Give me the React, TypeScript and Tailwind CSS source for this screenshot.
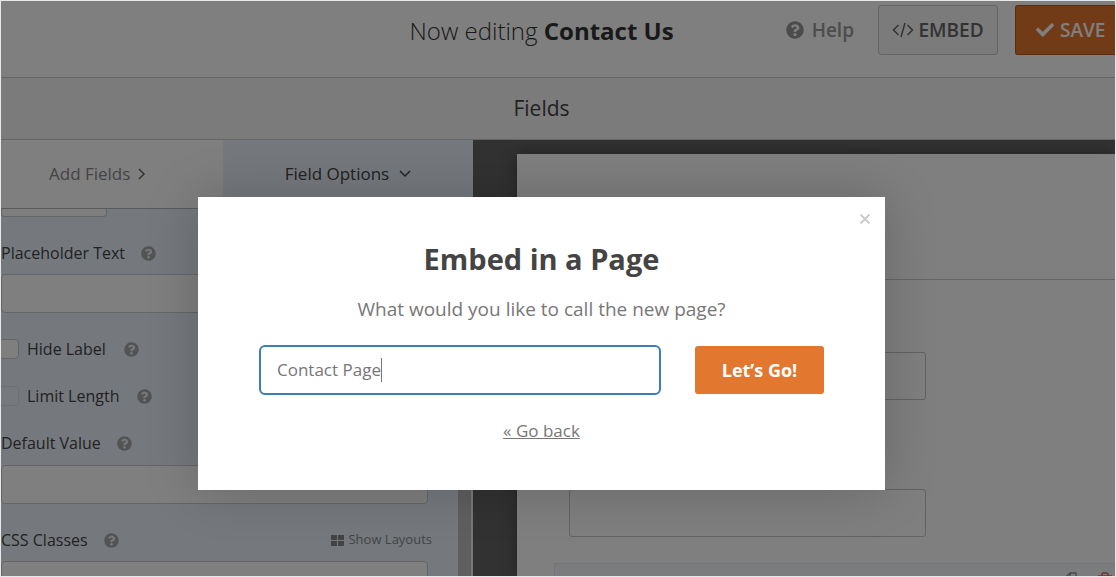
import { useState } from "react";
import type { ReactNode } from "react";
import { FaCheck, FaQuestionCircle } from "react-icons/fa";

const CodeIcon = () => (
  <svg
    viewBox="0 0 22 16"
    fill="none"
    stroke="currentColor"
    strokeWidth="1.5"
    className="h-4 w-[22px]"
    aria-hidden="true"
  >
    <path d="M6.5 3 1.5 8l5 5M15.5 3l5 5-5 5M13 1 9 15" />
  </svg>
);

const LayoutsIcon = () => (
  <svg viewBox="0 0 13 11" fill="currentColor" className="h-[11px] w-[13px]" aria-hidden="true">
    <path d="M0 0h6v5H0zM7 0h6v5H7zM0 6h6v5H0zM7 6h6v5H7z" />
  </svg>
);

const CopyIcon = () => (
  <svg
    viewBox="0 0 16 16"
    fill="none"
    stroke="currentColor"
    strokeWidth="1.5"
    className="size-4"
    aria-hidden="true"
  >
    <path d="M5 1h6v10H1V5zM5 1v4H1M11 5h4v10H6v-4" />
  </svg>
);

const TrashIcon = () => (
  <svg
    viewBox="0 0 14 16"
    fill="none"
    stroke="currentColor"
    strokeWidth="1.5"
    className="h-4 w-3.5"
    aria-hidden="true"
  >
    <path d="M4 4V2l1-1h4l1 1v2M0 4h14M2 4v11h10V4M5 6v7M9 6v7" />
  </svg>
);

const HelpTip = () => <FaQuestionCircle className="size-[15px] text-[#a6a6a6]" aria-hidden="true" />;

type FieldLabelProps = {
  id: string;
  children: ReactNode;
};

const FieldLabel = ({ id, children }: FieldLabelProps) => (
  <div className="flex h-6 items-center gap-4">
    <label htmlFor={id} className="whitespace-nowrap">
      {children}
    </label>
    <HelpTip />
  </div>
);

type FieldToggleProps = FieldLabelProps & {
  muted?: boolean;
};

const FieldToggle = ({ id, children, muted }: FieldToggleProps) => (
  <div className="-ml-0.5 flex h-6 items-center">
    <input
      id={id}
      type="checkbox"
      className={`mr-2 size-5 shrink-0 appearance-none rounded border ${
        muted ? "border-[#d8dee6] bg-[#edf3fa]" : "border-[#cacaca] bg-white"
      }`}
    />
    <label htmlFor={id} className="mr-[18px] whitespace-nowrap">
      {children}
    </label>
    <HelpTip />
  </div>
);

const fieldInput = "block h-[39px] w-full rounded border border-[#cacaca] bg-white px-3";

const Header = () => (
  <header className="flex h-[77px] shrink-0 items-start justify-end border-b border-[#cacaca] bg-white pt-1">
    <h1 className="mt-2 text-2xl leading-9 font-light whitespace-nowrap text-[#333]">
      Now editing <strong className="font-bold">Contact Us</strong>
    </h1>
    <div className="ml-28 flex h-[50px] shrink-0 items-center text-[19px] font-semibold">
      <button type="button" className="mr-6 flex items-center gap-2 text-[#999]">
        <FaQuestionCircle className="size-[18px]" aria-hidden="true" />
        Help
      </button>
      <button
        type="button"
        className="mr-[17px] flex h-full w-[120px] items-center justify-center gap-1 rounded-[3px] border border-[#cacaca] bg-[#f6f6f6] text-[#666]"
      >
        <CodeIcon />
        EMBED
      </button>
      <button
        type="button"
        className="flex h-full w-[100px] items-center gap-1.5 rounded-l-[3px] border border-r-0 border-[#b85a1b] bg-[#e27730] pl-5 text-white"
      >
        <FaCheck className="size-[18px]" aria-hidden="true" />
        SAVE
      </button>
    </div>
  </header>
);

const Sidebar = () => (
  <aside className="flex w-[472px] shrink-0 flex-col overflow-hidden bg-[#ebf3fc] text-base text-[#444]">
    <div className="flex h-[69px] shrink-0 border-b border-[#b0b6bd] text-[17px]">
      <button
        type="button"
        className="flex w-[222px] items-center gap-2 bg-white pl-12 text-[#888]"
      >
        Add Fields
        <svg viewBox="0 0 8 12" fill="none" stroke="#666" strokeWidth="1.5" className="h-3 w-2">
          <path d="m1 1 5 5-5 5" />
        </svg>
      </button>
      <button type="button" className="flex flex-1 items-center justify-center gap-2.5">
        Field Options
        <svg viewBox="0 0 12 8" fill="none" stroke="currentColor" strokeWidth="1.5" className="h-2 w-3">
          <path d="m1 1 5 5 5-5" />
        </svg>
      </button>
    </div>
    <div className="flex min-h-0 flex-1">
      <div className="flex-1 overflow-hidden pr-[30px]">
        <div className="h-2 w-[106px] rounded-b border border-t-0 border-[#cacaca] bg-white" />
        <div className="mt-6">
          <FieldLabel id="placeholder">Placeholder Text</FieldLabel>
        </div>
        <input id="placeholder" type="text" className={`mt-[9px] ${fieldInput}`} />
        <div className="mt-6 flex flex-col gap-[23px]">
          <FieldToggle id="hide-label">Hide Label</FieldToggle>
          <FieldToggle id="limit-length" muted>
            Limit Length
          </FieldToggle>
          <FieldLabel id="default-value">Default Value</FieldLabel>
        </div>
        <input id="default-value" type="text" className={`mt-[10px] ${fieldInput}`} />
        <div className="mt-6 -mr-1 flex items-center justify-between">
          <FieldLabel id="css-classes">CSS Classes</FieldLabel>
          <a href="#layouts" className="flex items-center gap-1 text-[13px] text-[#888]">
            <LayoutsIcon />
            Show Layouts
          </a>
        </div>
        <input id="css-classes" type="text" className={`mt-[9px] ${fieldInput}`} />
      </div>
      <div className="mr-0.5 w-[13px] bg-[#bfbfbf]" />
    </div>
  </aside>
);

const Preview = () => (
  <main className="flex-1 overflow-hidden bg-[#646464] pt-3.5 pl-11">
    <div className="h-full bg-white shadow-[0_0_15px_rgba(0,0,0,0.3)]">
      <div className="h-[126px] border-b border-[#cacaca]" />
      <div className="flex flex-col pt-[72px] pl-[52px]">
        <input
          type="text"
          aria-label="Name"
          className="h-12 w-[357px] rounded-[3px] border border-[#c4c4c4] bg-white"
        />
        <input
          type="text"
          aria-label="Email"
          className="mt-[89px] h-12 w-[357px] rounded-[3px] border border-[#c4c4c4] bg-white"
        />
      </div>
      <div className="mt-[26px] ml-[37px] flex h-28 justify-end gap-1 border border-r-0 border-[#e6ebf1] bg-[#f5f8fc] pt-1.5">
        <button
          type="button"
          aria-label="Duplicate field"
          className="flex size-7 justify-center rounded-full bg-[#fafbfd] pt-0.5 text-[#999]"
        >
          <CopyIcon />
        </button>
        <button
          type="button"
          aria-label="Delete field"
          className="-mr-1 flex size-7 justify-center rounded-full bg-[#fafbfd] pt-0.5 text-[#d66e6e]"
        >
          <TrashIcon />
        </button>
      </div>
    </div>
  </main>
);

const EmbedDialog = () => {
  const [name, setName] = useState("Contact Page");

  return (
    <div
      role="dialog"
      aria-labelledby="embed-title"
      className="relative flex w-[687px] flex-col items-center bg-white pt-11 pb-[47px] text-[#777] shadow-[0_0_50px_rgba(0,0,0,0.2)]"
    >
      <button type="button" aria-label="Close" className="absolute top-4 right-3.5 text-[#ccc]">
        <svg viewBox="0 0 12 12" stroke="currentColor" strokeWidth="2" className="size-3">
          <path d="m1.5 1.5 9 9M10.5 1.5l-9 9" />
        </svg>
      </button>
      <h2 id="embed-title" className="text-[29px] leading-9 font-bold text-[#444]">
        Embed in a Page
      </h2>
      <label htmlFor="page-name" className="mt-5 text-[19px] leading-6">
        What would you like to call the new page?
      </label>
      <div className="mt-6 flex w-full items-center gap-[34px] px-[61px]">
        <div className="flex h-[50px] flex-1 items-center rounded-md border-2 border-[#3c7fb8] px-4">
          <input
            id="page-name"
            type="text"
            value={name}
            onChange={(e) => setName(e.target.value)}
            className="field-sizing-content text-[17px] outline-none"
          />
          <span className="h-6 w-px bg-[#777]" />
        </div>
        <button
          type="button"
          className="h-12 w-[129px] rounded-[3px] bg-[#e27730] text-lg font-bold text-white"
        >
          Let’s Go!
        </button>
      </div>
      <a href="#back" className="mt-6 text-[17px] leading-6 underline">
        « Go back
      </a>
    </div>
  );
};

export default function App() {
  return (
    <div className="h-screen border border-[#e8e8e8] font-['Open_Sans','Noto_Sans',sans-serif]">
      <div className="relative flex h-full flex-col overflow-hidden">
        <Header />
        <div className="flex h-[62px] shrink-0 items-center justify-center border-b border-[#cacaca] bg-[#f6f6f6] pr-[33px] text-[21px] text-[#444]">
          Fields
        </div>
        <div className="flex min-h-0 flex-1">
          <Sidebar />
          <Preview />
        </div>
        <div className="absolute inset-0 flex items-start justify-center bg-black/50 pt-[196px] pr-[33px]">
          <EmbedDialog />
        </div>
      </div>
    </div>
  );
}
